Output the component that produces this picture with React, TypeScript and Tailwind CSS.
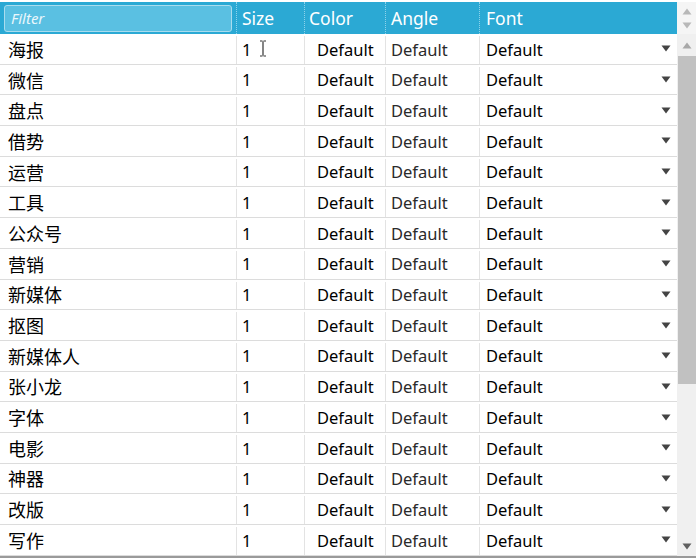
import React from 'react';

const names = ['海报', '微信', '盘点', '借势', '运营', '工具', '公众号', '营销', '新媒体', '抠图', '新媒体人', '张小龙', '字体', '电影', '神器', '改版', '写作'];

const font = "font-['Noto_Sans','Noto_Sans_CJK_SC',sans-serif]";

function Caret({ className }: { className: string }) {
  return (
    <svg width="10" height="7" viewBox="0 0 10 7" className={className}>
      <path d="M0.5 0.5H9.5L5 6.5Z" fill="currentColor" />
    </svg>
  );
}

function Row({ name, first }: { name: string; first: boolean }) {
  return (
    <div className="relative flex h-[30.7px] border-b border-[#dcdcdc] pt-[2px] text-[16.5px] leading-none text-black">
      <div className="flex w-[237px] items-center border-r border-[#e3e3e3] pl-2 text-[18px]">{name}</div>
      <div className="flex w-[68px] items-center border-r border-[#e3e3e3] pl-[5px]">1</div>
      <div className="flex w-[81px] items-center border-r border-[#e3e3e3] pl-[12px]">Default</div>
      <div className="flex w-[94px] items-center border-r border-[#e3e3e3] pl-[5px] text-[#2a2a2a]">Default</div>
      <div className="flex flex-1 items-center justify-between pl-[6px] pr-[6px]">
        <span>Default</span>
        <Caret className="-mt-[2px] text-[#444]" />
      </div>
      {first && (
        <svg width="8" height="17" viewBox="0 0 8 17" className="absolute left-[259px] top-[6px]">
          <path d="M1 1H3.5M4.5 1H7M4 1.5V15.5M1 16H3.5M4.5 16H7" stroke="#333" strokeWidth="1.2" fill="none" />
        </svg>
      )}
    </div>
  );
}

export default function App() {
  return (
    <div className={`flex h-[558px] w-[696px] flex-col overflow-hidden bg-white ${font}`}>
      {/* header */}
      <div className="flex h-[34px] pt-[2px]">
        <div className="flex w-[677px] items-stretch bg-[#2ba9d4] text-[17.5px] text-white">
          <div className="flex w-[237px] items-center border-r border-dotted border-[#8fd2ea] px-[4px]">
            <div className="flex h-[27px] w-full items-center rounded-[3px] border border-[#a9dcee] bg-[#5ac0e2] pl-[6px] text-[15px] italic text-[#eaf7fc]">
              Filter
            </div>
          </div>
          <div className="flex w-[68px] items-center border-r border-dotted border-[#8fd2ea] pl-[5px]">Size</div>
          <div className="flex w-[81px] items-center border-r border-dotted border-[#8fd2ea] pl-[4px]">Color</div>
          <div className="flex w-[94px] items-center border-r border-dotted border-[#8fd2ea] pl-[5px]">Angle</div>
          <div className="flex flex-1 items-center pl-[6px]">Font</div>
        </div>
        <div className="flex flex-1 flex-col items-center justify-center gap-[7px] bg-[#f5f5f5] pl-[1px]">
          <Caret className="rotate-180 text-[#b8b8b8]" />
          <Caret className="text-[#b8b8b8]" />
        </div>
      </div>
      {/* body */}
      <div className="flex min-h-0 flex-1 border-b-2 border-[#9a9a9a]">
        <div className="w-[677px]">
          {names.map((n, i) => (
            <Row key={n} name={n} first={i === 0} />
          ))}
        </div>
        <div className="flex flex-1 flex-col bg-[#f0f0f0] pl-[1px]">
          <div className="flex h-[22px] items-center justify-center">
            <Caret className="rotate-180 text-[#a8a8a8]" />
          </div>
          <div className="h-[328px] bg-[#c1c1c1]" />
          <div className="flex-1" />
          <div className="flex h-[20px] items-center justify-center">
            <Caret className="text-[#606060]" />
          </div>
        </div>
      </div>
    </div>
  );
}
